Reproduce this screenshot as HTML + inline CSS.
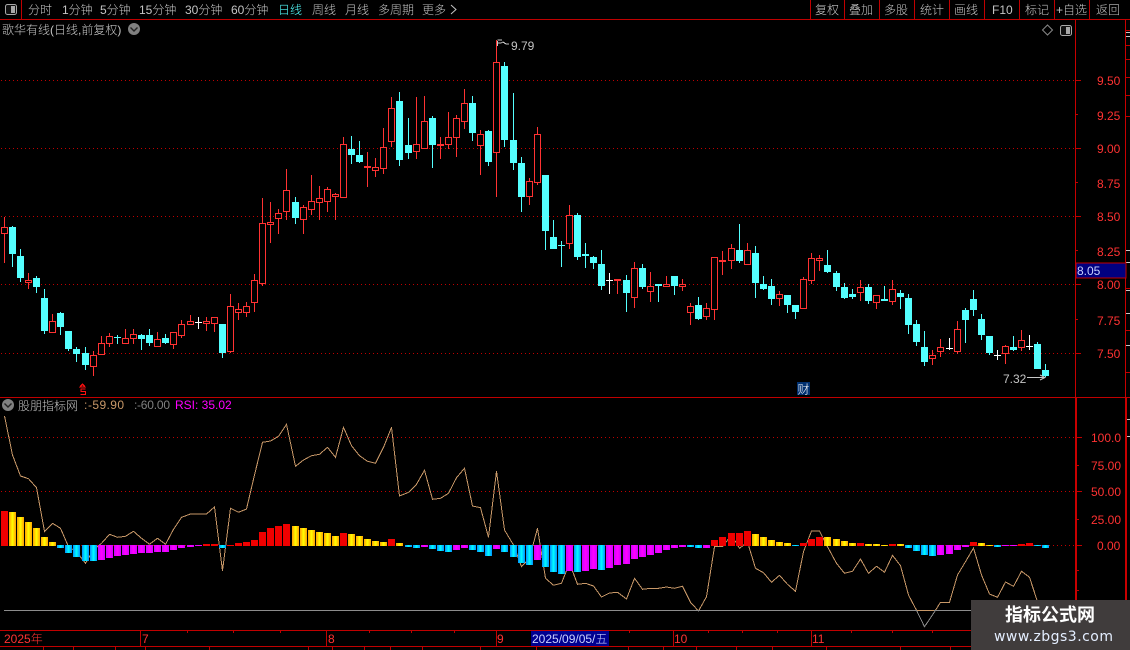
<!DOCTYPE html>
<html><head><meta charset="utf-8"><style>
html,body{margin:0;padding:0;background:#000;width:1130px;height:650px;overflow:hidden}
svg{display:block;position:absolute;left:0;top:0}
text{font-family:"Liberation Sans","WenQuanYi Zen Hei","Noto Sans CJK SC",sans-serif;font-size:12px;fill:#c4c4c4}
.r{fill:#ff3232}
.cjk{font-family:"Liberation Sans","Noto Sans CJK SC","WenQuanYi Zen Hei",sans-serif;font-weight:300}
</style></head><body>
<svg id="s" width="1130" height="650" viewBox="0 0 1130 650" xmlns="http://www.w3.org/2000/svg">
<defs>
<linearGradient id="gy" x1="0" x2="1" y1="0" y2="0"><stop offset="0" stop-color="#ffa000"/><stop offset=".5" stop-color="#ffff00"/><stop offset="1" stop-color="#ffa000"/></linearGradient>
<linearGradient id="gc" x1="0" x2="1" y1="0" y2="0"><stop offset="0" stop-color="#0090ff"/><stop offset=".5" stop-color="#00ffff"/><stop offset="1" stop-color="#0090ff"/></linearGradient>
<linearGradient id="gm" x1="0" x2="1" y1="0" y2="0"><stop offset="0" stop-color="#d000ff"/><stop offset=".5" stop-color="#ff00ff"/><stop offset="1" stop-color="#d000ff"/></linearGradient>
<clipPath id="ca"><rect x="0" y="400" width="1075" height="210.5"/></clipPath>
<clipPath id="cb"><rect x="0" y="610.5" width="1075" height="20"/></clipPath>
</defs>
<g id="dots" stroke="#c00000" stroke-dasharray="1 3" shape-rendering="crispEdges">
<path d="M1 80.5H1075M1 148.5H1075M1 216.5H1075M1 284.5H1075M1 353.5H1075M1 437.5H1075M1 491.5H1075M1 545.5H1075"/>
</g>
<g id="candles" shape-rendering="crispEdges"></g>
<g id="rsi" fill="none" stroke-width="1" shape-rendering="crispEdges"></g>
<g id="bars" shape-rendering="crispEdges"></g>
<g stroke="#c00000" fill="none" shape-rendering="crispEdges">
<path d="M0 19.5H1130M0 397.5H1130M0 630.5H1130M0 646.5H1130M21.5 0V19M810.5 0V19M844.5 0V19M879.5 0V19M914.5 0V19M949.5 0V19M984.5 0V19M1019.5 0V19M1054.5 0V19M1089.5 0V19"/>
<path d="M1075 80.5H1081M1075 114.5H1078M1075 148.5H1081M1075 182.5H1078M1075 216.5H1081M1075 250.5H1078M1075 284.5H1081M1075 319.5H1078M1075 353.5H1081M1075 437.5H1082M1075 465.5H1079M1075 491.5H1082M1075 519.5H1079M1075 545.5H1082M1075 570.5H1079M1075 590.5H1079"/>
<path d="M140.5 631V646M326.5 631V646M496.5 631V646M673.5 631V646M811.5 631V646M187.5 630V633M233.5 630V633M280.5 630V633M369.5 630V633M411.5 630V633M454.5 630V633M629.5 630V633M708.5 630V633M742.5 630V633M777.5 630V633M851.5 630V633M892.5 630V633M932.5 630V633"/>
<path d="M43.5 646V650M73.5 646V650M115.5 646V650M145.5 646V650M209.5 646V650M308.5 646V650M332.5 646V650M364.5 646V650M390.5 646V650M422.5 646V650M480.5 646V650M536.5 646V650M628.5 646V650M663.5 646V650M696.5 646V650M736.5 646V650M772.5 646V650M826.5 646V650M900.5 646V650M950.5 646V650"/>
<path d="M1126 30.5H1130M1126 45.5H1130M1126 59.5H1130M1126 77.5H1130M1126 95.5H1130M1126 116.5H1130M1126 288.5H1130M1126 330.5H1130M1126 372.5H1130"/>
</g>
<rect x="1075" y="19" width="1" height="379" fill="#c80000"/>
<rect x="1125" y="19" width="1" height="379" fill="#c80000"/>
<rect x="1075" y="397" width="2" height="253" fill="#c80000"/>
<rect x="1125" y="397" width="2" height="253" fill="#c80000"/>
<g stroke="#c8c8c8" fill="none" shape-rendering="crispEdges">
<path d="M1126 32.5H1130M1126 36.5H1130M1126 250.5H1130M1126 262.5H1130M1126 290.5H1130M1126 313.5H1130M1126 345.5H1130M1127 419.5H1130M1127 436.5H1130"/>
</g>

<!-- top bar -->
<rect x="5.5" y="4.5" width="11" height="10" rx="2" fill="#111" stroke="#a8a8a8"/><rect x="11" y="6" width="4" height="7" fill="#a8a8a8"/>
<text class="cjk" x="28" y="14">分时</text>
<text class="cjk" x="62" y="14">1分钟</text>
<text class="cjk" x="100" y="14">5分钟</text>
<text class="cjk" x="139" y="14">15分钟</text>
<text class="cjk" x="185" y="14">30分钟</text>
<text class="cjk" x="231" y="14">60分钟</text>
<text class="cjk" x="278" y="14" style="fill:#54ffff">日线</text>
<text class="cjk" x="312" y="14">周线</text>
<text class="cjk" x="345" y="14">月线</text>
<text class="cjk" x="378" y="14">多周期</text>
<text class="cjk" x="422" y="14">更多</text>
<path d="M451 5l5 4.5-5 4.5" fill="none" stroke="#c4c4c4"/>
<text class="cjk" x="815" y="14">复权</text>
<text class="cjk" x="849" y="14">叠加</text>
<text class="cjk" x="884" y="14">多股</text>
<text class="cjk" x="920" y="14">统计</text>
<text class="cjk" x="954" y="14">画线</text>
<text x="992" y="14">F10</text>
<text class="cjk" x="1025" y="14">标记</text>
<text class="cjk" x="1056" y="14">+自选</text>
<text class="cjk" x="1096" y="14">返回</text>

<!-- title row -->
<text class="cjk" x="2" y="34">歌华有线(日线,前复权)</text>
<circle cx="134" cy="29" r="6" fill="#808080"/><path d="M130.5 27.5l3.5 3.5 3.5-3.5" fill="none" stroke="#222" stroke-width="1.4"/>
<path d="M1047.5 25l5 5-5 5-5-5z" fill="none" stroke="#8a8a8a"/>
<rect x="1060.5" y="25.5" width="11" height="10" rx="2" fill="#111" stroke="#a8a8a8"/><rect x="1066" y="27" width="4" height="7" fill="#a8a8a8"/>

<!-- main axis -->
<text class="r" x="1097" y="85">9.50</text>
<text class="r" x="1097" y="120">9.25</text>
<text class="r" x="1097" y="153">9.00</text>
<text class="r" x="1097" y="188">8.75</text>
<text class="r" x="1097" y="221">8.50</text>
<text class="r" x="1097" y="256">8.25</text>
<rect x="1076" y="263" width="50" height="15" fill="#000080" stroke="#c00000" shape-rendering="crispEdges"/>
<text x="1077" y="275" style="fill:#c8d0ff">8.05</text>
<text class="r" x="1097" y="289">8.00</text>
<text class="r" x="1097" y="325">7.75</text>
<text class="r" x="1097" y="358">7.50</text>

<!-- marks on chart -->
<path d="M497.5 41V46M497.5 40H502M497.5 43H501L503 42L506 44L509 44" fill="none" stroke="#c8c8c8" shape-rendering="crispEdges"/>
<text x="511" y="50" style="font-size:12px">9.79</text>
<text x="1003" y="383" style="font-size:12px">7.32</text>
<path d="M1027 377.5H1045M1040 375L1045 377.5L1040 380" fill="none" stroke="#c8c8c8"/>
<path d="M80 387l2.5-3 2.5 3zM85.5 389H81V391.5H85.5V394.5H80.5" fill="none" stroke="#ff1010" stroke-width="1.3" shape-rendering="crispEdges"/>
<rect x="797" y="382" width="13" height="13" fill="#003070"/>
<text class="cjk" x="797.5" y="393.5" style="fill:#fff;font-size:12px">财</text>

<!-- indicator header -->
<circle cx="8" cy="405" r="6" fill="#808080"/><path d="M4.5 403.5l3.5 3.5 3.5-3.5" fill="none" stroke="#222" stroke-width="1.4"/>
<text class="cjk" x="18" y="410">股朋指标网</text>
<text x="84" y="409" style="fill:#c89868">:</text>
<text x="88" y="409" textLength="36" style="fill:#c89868">-59.90</text>
<text x="134" y="409" style="fill:#808080">:</text>
<text x="137" y="409" textLength="33" style="fill:#808080">-60.00</text>
<text x="175" y="409" style="fill:#ff00ff">RSI: 35.02</text>

<!-- indicator axis -->
<text class="r" x="1091" y="442">100.0</text>
<text class="r" x="1091" y="470">75.00</text>
<text class="r" x="1091" y="496">50.00</text>
<text class="r" x="1091" y="524">25.00</text>
<text class="r" x="1097" y="550">0.00</text>

<!-- date row -->
<text class="r cjk" x="4" y="643">2025年</text>
<text class="r" x="142" y="643">7</text>
<text class="r" x="328" y="643">8</text>
<text class="r" x="497" y="643">9</text>
<rect x="531" y="631" width="78" height="15" fill="#000090"/>
<text class="cjk" x="532" y="643" style="fill:#c8d0ff">2025/09/05/五</text>
<text class="r" x="674" y="643">10</text>
<text class="r" x="812" y="643">11</text>

<!-- watermark -->
<rect x="971" y="600" width="159" height="50" fill="#403c3c"/>
<text x="1005" y="621" style="font-family:'Noto Sans CJK SC','WenQuanYi Zen Hei',sans-serif;font-size:18px;font-weight:700;fill:#fff">指标公式网</text>
<text x="994" y="641" textLength="119" style="font-family:'DejaVu Sans',sans-serif;font-size:14px;fill:#e4eeff">www.zbgs3.com</text>
</svg>
<script>
var C="r,217,227,234,263;c,226,227,254,267;c,249,256,278,282;r,273,280,283,289;c,276,278,287,293;c,289,298,331,334;r,314,321,333,333;c,312,313,327,335;c,331,331,349,351;c,347,349,354,362;c,347,353,365,370;r,351,355,367,376;r,336,343,355,355;r,333,336,344,347;c,335,337,338,344;r,329,338,344,344;r,329,334,339,344;c,334,335,339,350;c,329,335,343,346;r,332,339,347,347;c,334,338,343,344;r,332,332,345,349;r,320,324,336,338;r,315,321,325,325;w,317,322,323,329;r,317,321,324,331;r,317,317,324,332;c,324,324,353,358;r,294,306,352,353;r,303,309,313,320;r,302,306,313,317;r,274,280,303,312;r,198,223,284,286;r,202,222,225,243;r,209,213,219,234;r,169,190,212,220;c,197,202,218,224;r,205,207,220,234;r,175,201,210,215;r,186,198,203,220;r,187,189,202,212;r,193,194,197,220;r,137,144,198,198;c,136,149,155,164;c,141,155,162,163;r,152,166,168,187;r,158,167,171,177;r,128,147,169,174;r,97,108,142,147;c,92,101,160,166;c,118,145,153,159;r,97,144,152,159;r,96,121,149,149;c,116,118,145,168;r,137,144,146,159;r,112,137,145,149;r,115,118,138,157;r,89,103,122,129;c,96,103,133,141;r,130,134,146,175;c,130,131,162,166;r,40,62,153,197;c,62,66,140,147;c,93,140,163,170;c,157,163,197,212;r,178,181,197,205;r,127,134,183,185;c,175,175,231,250;c,220,237,249,249;c,241,245,246,267;r,205,215,244,249;c,213,215,257,260;c,243,254,256,268;c,256,257,263,269;c,250,264,286,290;w,273,280,281,294;r,279,279,281,294;c,275,280,293,312;r,262,268,298,308;c,264,268,287,289;r,272,286,292,302;c,284,284,286,302;r,276,284,287,287;c,276,276,286,295;r,279,284,287,291;r,303,306,313,325;c,297,305,319,320;r,303,308,317,320;r,257,257,310,320;r,251,260,262,275;r,244,248,261,269;c,224,250,261,263;r,243,250,265,265;c,246,253,283,298;c,276,284,289,290;c,279,286,299,305;r,291,294,299,306;c,295,295,305,313;c,305,305,312,319;r,277,279,309,309;r,253,258,281,284;r,255,258,261,271;c,250,265,272,273;c,271,273,287,291;c,283,287,298,299;c,289,294,297,299;r,280,287,293,301;c,284,287,301,304;r,295,295,303,309;c,286,299,301,301;r,280,289,302,305;c,290,293,297,309;c,294,298,325,334;c,320,324,342,346;c,331,347,362,366;r,350,355,359,365;r,339,347,352,357;w,338,348,349,350;r,321,329,352,354;c,308,310,320,343;c,290,299,310,316;c,314,319,335,340;c,336,336,353,355;w,350,355,356,360;r,345,346,354,364;c,336,347,350,351;r,330,340,348,351;w,335,346,347,350;c,342,344,369,369;c,364,370,376,377".split(";");
function X(i){return Math.floor(4.3+8.075*i)}
var h="",col={r:"#ff3232",c:"#54ffff",w:"#ffffff"};
C.forEach(function(s,i){var p=s.split(","),t=p[0],a=+p[1],b=+p[2],d=+p[3],e=+p[4],x=X(i),f=col[t];
 h+='<rect x="'+x+'" y="'+a+'" width="1" height="'+(b-a)+'" fill="'+f+'"/>';
 h+='<rect x="'+x+'" y="'+d+'" width="1" height="'+(e-d)+'" fill="'+f+'"/>';
 if(t=="r"&&d-b>2){h+='<rect x="'+(x-2.5)+'" y="'+(b+.5)+'" width="6" height="'+(d-b-1)+'" fill="#000" stroke="'+f+'"/>';}
 else if(t=="w"){h+='<rect x="'+(x-3)+'" y="'+b+'" width="7" height="1" fill="'+f+'"/>';}
 else{h+='<rect x="'+(x-3)+'" y="'+b+'" width="7" height="'+Math.max(d-b,1)+'" fill="'+f+'"/>';}
});
document.getElementById("candles").innerHTML=h;
var R=[416,455,476,478.7,487.7,531.3,523.3,528.3,546.7,551.7,563.3,550,543.3,534.3,537.3,536.3,531.3,538.3,544.3,538.3,544.3,529.3,517.3,514,514,514,507,570.7,508.3,512.3,509,475,442.3,441,436.3,424.3,466.3,460,455.7,454.3,447.3,457.3,427.3,445.7,455.7,461.3,463.3,447.3,427.3,496,492.3,484.3,470.3,499.3,498.3,493.3,477.7,468.3,506,507.7,537.3,471.3,530,545,566.7,558,528.3,578.3,585.3,583.3,563,584.3,583.3,586,597,593,592.3,599,578.3,589.3,588.3,588.3,587,588.3,586.3,602.3,611,596.7,546.7,546.7,535,548.3,542,568.3,572.7,582.3,575.3,584.3,591.3,551.7,531,531,546.7,563.3,573.3,571.3,559,573.3,566.3,572.3,555.3,565.7,595,610.3,626.7,615,602.3,602.3,575,561.7,548,575,594,597.3,582,586.3,571.3,577.3,601.7,612];
var pts=R.map(function(y,i){return (X(i)+.5)+","+y}).join(" ");
document.getElementById("rsi").innerHTML='<polyline points="'+pts+'" stroke="#8c8c8c" clip-path="url(#cb)"/><polyline points="'+pts+'" stroke="#c89868" clip-path="url(#ca)"/>';
var B="r511 y512 y517 y522 y528 y537 y542 c548 c553 c557 c561 c561 m560 m558 m556 m555 m554 m553 m553 m552 m552 m550 m548 m547 m546 r544 r544 c548 r545 r543 r542 r540 r532 r528 r526 r524 y526 y528 y530 y532 y533 y536 r533 y534 y536 y539 y541 y542 r539 y543 c547 c548 m547 c549 c551 c552 m550 m548 c550 c552 c556 m549 c552 c557 c563 c565 m560 c567 c572 c574 m571 c572 m571 m569 c570 m568 m565 m564 m559 m557 m555 m553 m550 m548 m547 c547 c548 m548 r540 r537 r533 r533 r531 y534 y537 y540 y542 y543 c546 r543 r539 r537 y537 y539 y541 y543 r543 y544 y544 y545 r544 y544 c548 c551 c555 c556 m555 m554 m550 m547 r542 y543 y545 c547 m546 m546 r544 r543 c546 c548".split(" ");
var g={y:"url(#gy)",c:"url(#gc)",m:"url(#gm)",r:"#f00000"},b="";
B.forEach(function(s,i){var t=s[0],v=+s.slice(1),x=X(i),top,ht;
 if(v<=545){top=v;ht=546-v;}else{top=545;ht=v-545;}
 b+='<rect x="'+(x-3)+'" y="'+top+'" width="7" height="'+ht+'" fill="'+g[t]+'"/>';
});
b='<path d="M4 610.5H1040" stroke="#8c8c8c"/><path d="M917 610.5H934" stroke="#c89868"/>'+b;
document.getElementById("bars").innerHTML=b;
</script>
</body></html>
